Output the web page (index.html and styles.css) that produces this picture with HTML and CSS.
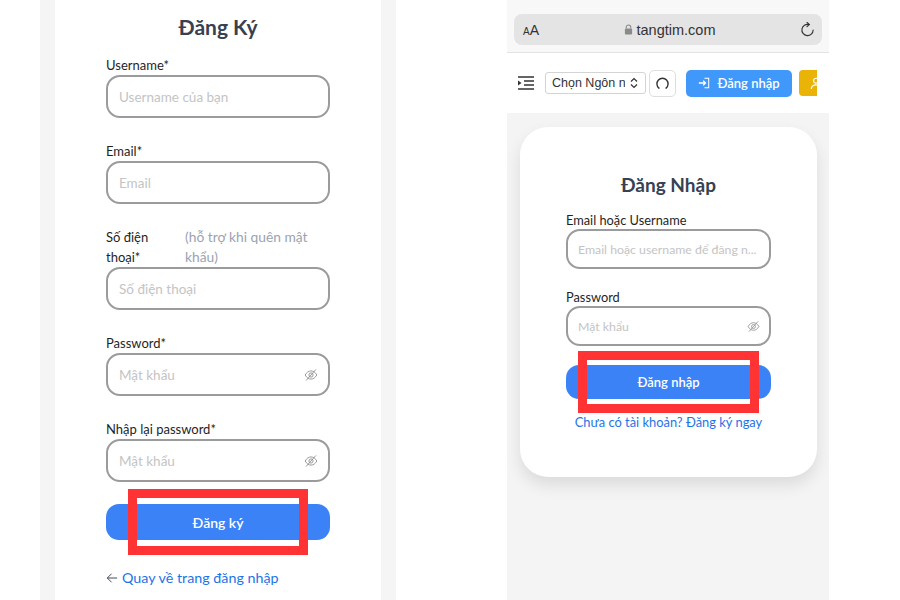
FILE: index.html
```html
<!DOCTYPE html>
<html>
<head>
    <title>Tang Tim</title>
    <link rel="stylesheet" href="styles.css">
</head>
<body>
    <svg class="icon-defs" width="0" height="0">
        <symbol id="eyeOff" viewBox="0 0 24 24">
            <path d="M2 12c2.500-4.500 6-7 10-7s7.500 2.500 10 7c-2.500 4.500-6 7-10 7s-7.500-2.500-10-7z" fill="none" stroke="currentColor" stroke-width="1.500"/>
            <circle cx="12" cy="12" r="3.600" fill="none" stroke="currentColor" stroke-width="1.500"/>
            <path d="M20 3L4 21" stroke="currentColor" stroke-width="1.500" stroke-linecap="round"/>
        </symbol>
    </svg>

    <section class="phone-register">
        <div class="card">
            <h1 class="card-title">Đăng Ký</h1>
            <div class="field">
                <label>Username*</label>
                <div class="input"><span>Username của bạn</span></div>
            </div>
            <div class="field">
                <label>Email*</label>
                <div class="input"><span>Email</span></div>
            </div>
            <div class="field">
                <div class="label-row">
                    <label>Số điện thoại*</label>
                    <span class="label-hint">(hỗ trợ khi quên mật khẩu)</span>
                </div>
                <div class="input"><span>Số điện thoại</span></div>
            </div>
            <div class="field">
                <label>Password*</label>
                <div class="input"><span>Mật khẩu</span><svg class="eye"><use href="#eyeOff"/></svg></div>
            </div>
            <div class="field">
                <label>Nhập lại password*</label>
                <div class="input"><span>Mật khẩu</span><svg class="eye"><use href="#eyeOff"/></svg></div>
            </div>
            <button class="submit">Đăng ký<i class="mark"></i></button>
            <a class="back-link">
                <svg class="back-arrow" viewBox="0 0 14 14"><path d="M13 7H1.500M6.500 2L1.500 7l5 5" fill="none" stroke="currentColor" stroke-width="1.100"/></svg>
                <span>Quay về trang đăng nhập</span>
            </a>
        </div>
    </section>

    <section class="phone-login">
        <div class="browser-bar">
            <div class="address">
                <span class="text-size"><small>A</small>A</span>
                <span class="url">
                    <svg class="lock" viewBox="0 0 10 12"><path d="M2.500 5V3.500a2.500 2.500 0 0 1 5 0V5" fill="none" stroke="currentColor" stroke-width="1.200"/><rect x="1" y="5" width="8" height="6.500" rx="1" fill="currentColor"/></svg>
                    tangtim.com
                </span>
                <svg class="reload" viewBox="0 0 16 16"><path d="M9.500 2.700A6 6 0 1 0 14 8.500" fill="none" stroke="currentColor" stroke-width="1.200" stroke-linecap="round"/><path d="M7.500 .5l2.500 2.200-2.500 2.300" fill="none" stroke="currentColor" stroke-width="1.200" stroke-linecap="round"/></svg>
            </div>
        </div>
        <nav class="topnav">
            <svg class="menu-icon" viewBox="0 0 16 14"><path d="M0 1h16M6 5h10M6 9h10M0 13h16" stroke="currentColor" stroke-width="1.500"/><path d="M0 4.500L3.500 7 0 9.500z" fill="currentColor"/></svg>
            <div class="lang-select">
                <span class="lang-text">Chọn Ngôn ngữ</span>
                <svg class="updown" viewBox="0 0 8 12"><path d="M1 4.500L4 1.500l3 3M1 7.500l3 3 3-3" fill="none" stroke="currentColor" stroke-width="1.200"/></svg>
            </div>
            <div class="icon-btn">
                <svg viewBox="0 0 14 14"><path d="M3.200 12A6 6 0 1 1 10.800 12" fill="none" stroke="currentColor" stroke-width="1.500" stroke-linecap="round"/></svg>
            </div>
            <div class="nav-login">
                <svg viewBox="0 0 14 14"><path d="M1 7h7.500M6 4.200L8.800 7 6 9.800" fill="none" stroke="currentColor" stroke-width="1.500"/><path d="M7.500 1.500h5v11h-5" fill="none" stroke="currentColor" stroke-width="1.200"/></svg>
                <span>Đăng nhập</span>
            </div>
            <div class="nav-yellow">
                <svg viewBox="0 0 12 14"><circle cx="6" cy="4" r="2.600" fill="none" stroke="currentColor" stroke-width="1.200"/><path d="M1 13c0-3 2-4.500 5-4.500s5 1.500 5 4.500" fill="none" stroke="currentColor" stroke-width="1.200"/></svg>
            </div>
        </nav>
        <div class="login-area">
            <div class="login-card">
                <h1 class="login-title">Đăng Nhập</h1>
                <div class="login-field">
                    <label>Email hoặc Username</label>
                    <div class="input"><span>Email hoặc username để đăng n...</span></div>
                </div>
                <div class="login-field">
                    <label>Password</label>
                    <div class="input"><span>Mật khẩu</span><svg class="eye"><use href="#eyeOff"/></svg></div>
                </div>
                <button class="submit">Đăng nhập<i class="mark"></i></button>
                <a class="signup-link">Chưa có tài khoản? Đăng ký ngay</a>
            </div>
        </div>
    </section>
</body>
</html>
```

FILE: styles.css
```css
body {
    font-family: Lato, "Noto Sans", sans-serif;
    background-color: #fff;
    margin: 0;
    height: 600px;
    overflow: hidden;
    display: flex;
    color: #1f1f1f;
}
.icon-defs {
    position: absolute;
}
.phone-register {
    width: 356px;
    height: 600px;
    margin-left: 40px;
    padding: 0 15px;
    box-sizing: border-box;
    background-color: #f5f5f5;
}
.card {
    height: 600px;
    box-sizing: border-box;
    padding: 13px 51px 0;
    background-color: #fff;
}
.card-title {
    margin: 0 0 14px;
    font-size: 21px;
    line-height: 28px;
    font-weight: 700;
    text-align: center;
    color: #374151;
}
.field {
    margin-bottom: 23px;
}
label {
    display: block;
    font-size: 13px;
    line-height: 20px;
}
.label-row {
    display: flex;
}
.label-row label {
    width: 79px;
    flex-shrink: 0;
}
.label-hint {
    font-size: 13.800px;
    line-height: 20px;
    color: #9ca3af;
}
.input {
    height: 43px;
    box-sizing: border-box;
    border: 2px solid #9b9b9b;
    border-radius: 14px;
    padding: 0 10px 0 11px;
    display: flex;
    align-items: center;
    justify-content: space-between;
    gap: 6px;
    font-size: 13.500px;
    color: #c4c4c4;
    background-color: #fff;
}
.eye {
    width: 14px;
    height: 14px;
    flex-shrink: 0;
    color: #8c8c8c;
}
.submit {
    position: relative;
    display: block;
    width: 100%;
    height: 36px;
    margin-top: -1px;
    border: none;
    border-radius: 13px;
    background-color: #3b82f6;
    color: #fff;
    font-family: inherit;
    font-size: 14px;
    font-weight: 600;
}
.mark {
    position: absolute;
    left: 22px;
    right: 22px;
    top: -15px;
    bottom: -15px;
    border: 9px solid #ff3333;
}
.back-link {
    display: flex;
    align-items: center;
    gap: 4px;
    margin-top: 29px;
    font-size: 14.300px;
    line-height: 18px;
    color: #1d74e8;
}
.back-arrow {
    width: 12px;
    height: 12px;
    color: #374151;
}

.phone-login {
    width: 322px;
    height: 600px;
    margin-left: 111px;
    background-color: #f4f4f4;
    display: flex;
    flex-direction: column;
}
.browser-bar {
    height: 53px;
    box-sizing: border-box;
    padding: 14px 7px 0;
    background-color: #f8f8f8;
    border-bottom: 1px solid #e3e3e3;
}
.address {
    height: 31px;
    border-radius: 8px;
    background-color: #e4e4e4;
    display: flex;
    align-items: center;
    justify-content: space-between;
    padding: 0 7px 0 9px;
    font-family: "Liberation Sans", sans-serif;
    color: #333;
}
.text-size {
    font-size: 14px;
}
.text-size small {
    font-size: 10px;
}
.url {
    display: flex;
    align-items: center;
    gap: 4px;
    font-size: 14.500px;
}
.lock {
    width: 9px;
    height: 11px;
    color: #8a8a8a;
}
.reload {
    width: 15px;
    height: 15px;
    color: #333;
}
.topnav {
    height: 60px;
    box-sizing: border-box;
    padding: 0 12px 0 11px;
    background-color: #fff;
    display: flex;
    align-items: center;
}
.menu-icon {
    width: 16px;
    height: 14px;
    flex-shrink: 0;
    color: #333;
}
.lang-select {
    width: 101px;
    height: 22px;
    flex-shrink: 0;
    box-sizing: border-box;
    margin-left: 11px;
    padding: 0 7px 0 6px;
    border: 1px solid #d4d4d4;
    border-radius: 3px;
    display: flex;
    align-items: center;
    gap: 5px;
    font-family: "Liberation Sans", sans-serif;
    font-size: 12.500px;
    color: #333;
}
.lang-text {
    flex: 1;
    overflow: hidden;
    white-space: nowrap;
}
.updown {
    width: 8px;
    height: 12px;
    flex-shrink: 0;
}
.icon-btn {
    width: 27px;
    height: 27px;
    flex-shrink: 0;
    box-sizing: border-box;
    margin-left: 3px;
    border: 1px solid #dedede;
    border-radius: 5px;
    display: flex;
    align-items: center;
    justify-content: center;
    color: #333;
}
.icon-btn svg {
    width: 13px;
    height: 13px;
}
.nav-login {
    width: 106px;
    height: 27px;
    flex-shrink: 0;
    margin-left: 10px;
    border-radius: 5px;
    background-color: #4098fb;
    color: #fff;
    display: flex;
    align-items: center;
    justify-content: center;
    gap: 7px;
    font-size: 13px;
    font-weight: 600;
}
.nav-login svg {
    width: 12px;
    height: 12px;
}
.nav-yellow {
    width: 18px;
    height: 26px;
    flex-shrink: 0;
    box-sizing: border-box;
    margin-left: 7px;
    padding-left: 11px;
    border-radius: 4px 0 0 4px;
    background-color: #eab308;
    color: #fff;
    display: flex;
    align-items: center;
    overflow: hidden;
}
.nav-yellow svg {
    width: 12px;
    height: 13px;
    flex-shrink: 0;
}
.login-area {
    flex: 1;
    padding: 14px 12px 0 13px;
}
.login-card {
    height: 350px;
    box-sizing: border-box;
    padding: 47px 46px 0;
    border-radius: 28px;
    background-color: #fff;
    box-shadow: 0 8px 16px rgba(0, 0, 0, 0.1);
}
.login-title {
    margin: 0 0 15px;
    font-size: 19px;
    line-height: 22px;
    font-weight: 700;
    text-align: center;
    color: #374151;
}
.login-field {
    margin-bottom: 19px;
}
.login-field label {
    font-size: 12.800px;
    line-height: 18px;
}
.login-field .input {
    height: 40px;
    padding: 0 9px 0 10px;
    font-size: 12.300px;
}
.login-field .eye {
    width: 13px;
    height: 13px;
}
.login-card .submit {
    height: 34px;
    margin-top: 1px;
    font-size: 13px;
}
.login-card .mark {
    left: 12px;
    right: 12px;
    top: -14px;
    bottom: -14px;
}
.signup-link {
    display: block;
    margin-top: 14px;
    font-size: 12.900px;
    line-height: 18px;
    white-space: nowrap;
    text-align: center;
    color: #1d74e8;
}
```
